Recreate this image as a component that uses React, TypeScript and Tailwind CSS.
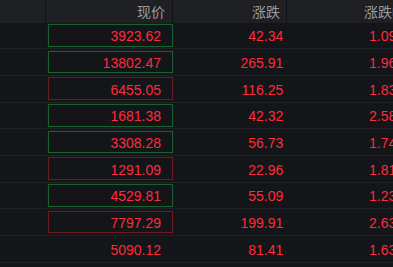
import React from "react";

type Row = { price: string; chg: string; pct: string; box: "g" | "r" | "n" };

const rows: Row[] = [
  { price: "3923.62", chg: "42.34", pct: "1.09%", box: "g" },
  { price: "13802.47", chg: "265.91", pct: "1.96%", box: "g" },
  { price: "6455.05", chg: "116.25", pct: "1.83%", box: "r" },
  { price: "1681.38", chg: "42.32", pct: "2.58%", box: "g" },
  { price: "3308.28", chg: "56.73", pct: "1.74%", box: "g" },
  { price: "1291.09", chg: "22.96", pct: "1.81%", box: "r" },
  { price: "4529.81", chg: "55.09", pct: "1.23%", box: "g" },
  { price: "7797.29", chg: "199.91", pct: "2.63%", box: "r" },
  { price: "5090.12", chg: "81.41", pct: "1.63%", box: "n" },
];

const num = { fontFamily: '"Liberation Sans", Arial, sans-serif' };
const cjk = { fontFamily: '"Noto Sans CJK SC", "Liberation Sans", sans-serif' };

export default function App() {
  return (
    <div className="w-[393px] h-[267px] overflow-hidden bg-[#141518]">
      <div className="w-[440px]">
        <div className="flex h-[22.67px] bg-[#1f2023] text-[14px] text-[#9b9b9d]" style={cjk}>
          <div className="w-[46px] shrink-0 border-r border-[#111214]" />
          <div className="w-[127px] shrink-0 border-r border-[#111214] flex items-center justify-end pr-[7px] leading-none">现价</div>
          <div className="w-[114px] shrink-0 border-r border-[#111214] flex items-center justify-end pr-[6px] leading-none">涨跌</div>
          <div className="flex-1 flex items-center justify-start pl-[77px] leading-none whitespace-nowrap">涨跌幅</div>
        </div>
        {rows.map((r, i) => (
          <div key={i} className="flex h-[26.67px] border-b border-[#202125] text-[14px] text-[#ff2b3b]" style={num}>
            <div className="w-[46px] shrink-0" />
            <div className="w-[127px] shrink-0 pl-[1.5px] pt-[1.3px] pb-[1.5px]">
              <div
                className={
                  "h-full flex items-center justify-end pr-[11px] pt-[2px] leading-none border " +
                  (r.box === "g"
                    ? "border-[#18602f] shadow-[0_0_1px_#0e4420]"
                    : r.box === "r"
                    ? "border-[#6c1b20] shadow-[0_0_1px_#4a1014]"
                    : "border-transparent")
                }
              >
                {r.price}
              </div>
            </div>
            <div className="w-[114px] shrink-0 flex items-center justify-end pr-[3.7px] pt-[2px] leading-none">{r.chg}</div>
            <div className="flex-1 flex items-center justify-start pl-[82px] pt-[2px] leading-none whitespace-nowrap">{r.pct}</div>
          </div>
        ))}
      </div>
    </div>
  );
}
